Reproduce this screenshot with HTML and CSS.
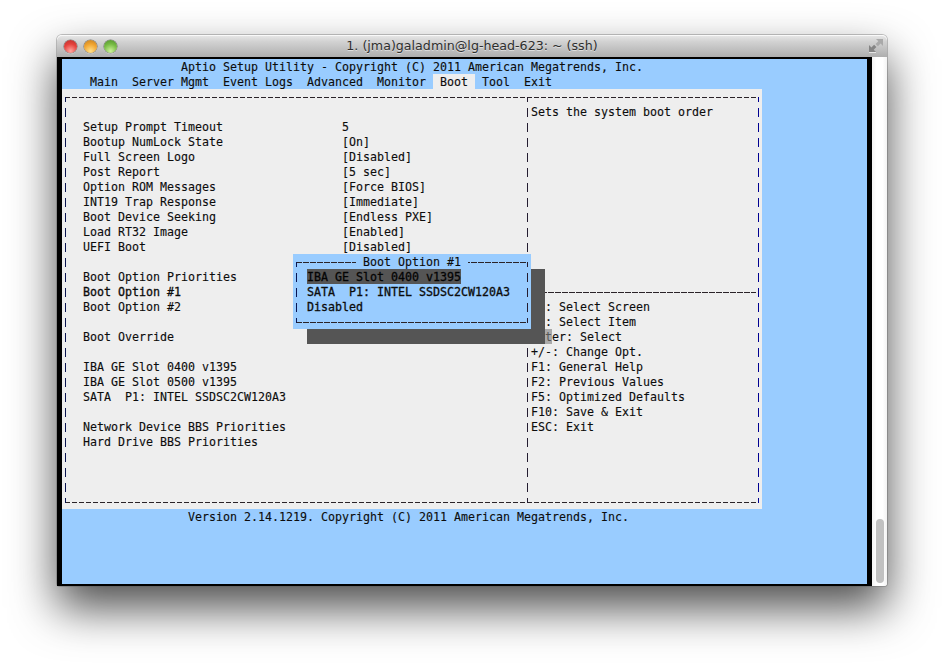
FILE: index.html
```html
<!DOCTYPE html>
<html lang="en">
<head>
<meta charset="utf-8">
<title>1. (jma)galadmin@lg-head-623: ~ (ssh)</title>
<link rel="stylesheet" href="styles.css">
</head>
<body>
<div class="window">
  <header class="titlebar">
    <div class="lights">
      <span class="light light-red"></span>
      <span class="light light-yellow"></span>
      <span class="light light-green"></span>
    </div>
    <div class="title">1. (jma)galadmin@lg-head-623: ~ (ssh)</div>
    <svg class="resize" width="16" height="16" viewBox="0 0 16 16">
      <path fill="#a9a9a9" d="M8 1h7v7l-2.4-2.4-2.7 2.7-2.3-2.3 2.7-2.7z"/>
      <path fill="#858585" d="M1 14V7l2.4 2.4 2.7-2.7 2.3 2.3-2.7 2.7L8 14z"/>
      <path fill="#e4e4e4" d="M1 14h7v1H1z"/>
    </svg>
  </header>
  <div class="body">
    <div class="terminal">
      <div class="screen">
        <div class="row head-title">Aptio Setup Utility - Copyright (C) 2011 American Megatrends, Inc.</div>
        <div class="row">    Main  Server Mgmt  Event Logs  Advanced  Monitor <span class="tab-active"> Boot </span> Tool  Exit</div>
        <div class="panel">
          <svg class="frame" width="700" height="420">
            <path class="h" d="M3 8.5H697M3 413.5H697"/>
            <path class="h solid" d="M465 203.5H694"/>
            <path class="v v-left" d="M3.5 8V414"/>
            <path class="v v-mid" d="M465.5 8V414"/>
            <path class="v v-right" d="M696.5 8V414"/>
          </svg>
          <div class="pane-left">
            <div class="setting"><span>Setup Prompt Timeout</span><span>5</span></div>
            <div class="setting"><span>Bootup NumLock State</span><span>[On]</span></div>
            <div class="setting"><span>Full Screen Logo</span><span>[Disabled]</span></div>
            <div class="setting"><span>Post Report</span><span>[5 sec]</span></div>
            <div class="setting"><span>Option ROM Messages</span><span>[Force BIOS]</span></div>
            <div class="setting"><span>INT19 Trap Response</span><span>[Immediate]</span></div>
            <div class="setting"><span>Boot Device Seeking</span><span>[Endless PXE]</span></div>
            <div class="setting"><span>Load RT32 Image</span><span>[Enabled]</span></div>
            <div class="setting"><span>UEFI Boot</span><span>[Disabled]</span></div>
            <div class="row gap">Boot Option Priorities</div>
            <div class="row strong">Boot Option #1</div>
            <div class="row">Boot Option #2</div>
            <div class="row gap">Boot Override</div>
            <div class="row gap">IBA GE Slot 0400 v1395</div>
            <div class="row">IBA GE Slot 0500 v1395</div>
            <div class="row">SATA  P1: INTEL SSDSC2CW120A3</div>
            <div class="row gap">Network Device BBS Priorities</div>
            <div class="row">Hard Drive BBS Priorities</div>
          </div>
          <div class="pane-right">
            <div class="row">Sets the system boot order</div>
            <div class="help">
              <div class="row">→←: Select Screen</div>
              <div class="row">↑↓: Select Item</div>
              <div class="row">En<span class="dim">t</span>er: Select</div>
              <div class="row">+/-: Change Opt.</div>
              <div class="row">F1: General Help</div>
              <div class="row">F2: Previous Values</div>
              <div class="row">F5: Optimized Defaults</div>
              <div class="row">F10: Save &amp; Exit</div>
              <div class="row">ESC: Exit</div>
            </div>
          </div>
        </div>
        <div class="row foot">Version 2.14.1219. Copyright (C) 2011 American Megatrends, Inc.</div>
        <div class="popup">
          <svg class="popup-frame" width="238" height="75">
            <path class="h solid" d="M3 8.5H235M3 68.5H235"/>
            <path class="v v-left" d="M3.5 8V69"/>
            <path class="v v-mid" d="M234.5 8V69"/>
          </svg>
          <div class="popup-title"><span>Boot Option #1</span></div>
          <div class="row popup-item strong"><span class="selected">IBA GE Slot 0400 v1395</span></div>
          <div class="row popup-item strong">SATA  P1: INTEL SSDSC2CW120A3</div>
          <div class="row popup-item strong">Disabled</div>
        </div>
      </div>
    </div>
    <div class="scrollbar"><div class="thumb"></div></div>
  </div>
</div>
</body>
</html>
```
FILE: styles.css
```css
* { box-sizing: border-box; }
html, body { margin: 0; height: 100%; }
body {
  background: #fff;
  padding: 35px 0 0 57px;
  overflow: hidden;
}
.window {
  width: 830px;
  height: 551px;
  border-radius: 5px 5px 3px 3px;
  box-shadow: 0 0 0 1px rgba(90, 90, 90, .35), 0 22px 46px rgba(0, 0, 0, .7);
  display: flex;
  flex-direction: column;
  background: #fff;
}
.titlebar {
  height: 22px;
  flex: none;
  display: grid;
  grid-template-columns: 1fr auto 1fr;
  align-items: center;
  border-radius: 5px 5px 0 0;
  background: linear-gradient(#e9e9e9, #d2d2d2 30%, #aeaeae);
  box-shadow: inset 0 1px 0 rgba(255, 255, 255, .75);
}
.lights {
  display: flex;
  gap: 7px;
  padding-left: 7px;
}
.light {
  width: 13px;
  height: 13px;
  border-radius: 50%;
  box-shadow: 0 0 0 .5px rgba(0, 0, 0, .45), 0 1px 1px rgba(255, 255, 255, .6);
}
.light-red { background: radial-gradient(circle at 50% 85%, #ffa6a0, #e5413c 55%, #b5302c); }
.light-yellow { background: radial-gradient(circle at 50% 85%, #ffe08a, #f1a42f 55%, #bd7d24); }
.light-green { background: radial-gradient(circle at 50% 85%, #cdf29b, #77bb44 55%, #4f8e2d); }
.title {
  font: 12.65px/16px "DejaVu Sans", sans-serif;
  color: #2e2e2e;
  text-shadow: 0 1px 0 rgba(255, 255, 255, .5);
  white-space: nowrap;
}
.resize { justify-self: end; margin-right: 3px; }
.body {
  flex: 1;
  display: flex;
  min-height: 0;
}
.terminal {
  width: 815px;
  background: #000;
  padding: 2px 5px;
}
.screen {
  position: relative;
  height: 525px;
  background: #9cf;
  font: 11.63px/17px "DejaVu Sans Mono", monospace;
  color: #0c0c0c;
  -webkit-text-stroke: .12px #0c0c0c;
}
.row { white-space: pre; height: 15px; }
.head-title { padding-left: 119px; }
.tab-active { background: #eee; display: inline-block; height: 15px; }
.foot { padding-left: 126px; }
.panel {
  position: relative;
  width: 700px;
  height: 420px;
  background: #eee;
  padding-top: 15px;
  display: grid;
  grid-template-columns: 469px 231px;
}
.frame, .popup-frame {
  position: absolute;
  left: 0;
  top: 0;
  fill: none;
}
.h { stroke: #2a2328; stroke-dasharray: 5 2; }
.h.solid { stroke-dasharray: 6 1; }
.v { stroke-dasharray: 9 6; stroke-dashoffset: 4; }
.v-left { stroke: #0a1450; }
.v-mid { stroke: #241c30; }
.v-right { stroke: #000090; }
.pane-left { padding: 15px 0 0 21px; }
.setting {
  display: grid;
  grid-template-columns: 259px auto;
  white-space: pre;
  height: 15px;
}
.gap { margin-top: 15px; }
.strong { -webkit-text-stroke: .3px #0c0c0c; }
.help { margin-top: 180px; }
.dim { background: #aaa; color: #555; -webkit-text-stroke: 0; display: inline-block; height: 15px; }
.popup {
  position: absolute;
  left: 231px;
  top: 195px;
  width: 238px;
  height: 75px;
  background: #9cf;
  box-shadow: 14px 15px 0 #555;
}
.popup-title {
  position: relative;
  height: 15px;
  text-align: center;
  white-space: pre;
}
.popup-title span { background: #9cf; padding: 0 7px; display: inline-block; height: 15px; }
.popup-item { position: relative; padding-left: 14px; }
.selected { background: #555; color: #000; display: inline-block; height: 15px; }
.scrollbar {
  width: 15px;
  background: linear-gradient(90deg, #f3f3f3, #fff 30%, #fff 70%, #f3f3f3);
  display: flex;
  justify-content: center;
  align-items: flex-end;
  padding-bottom: 3px;
  border-radius: 0 0 3px 0;
}
.thumb {
  width: 8px;
  height: 64px;
  border-radius: 4px;
  background: #c1c1c1;
}
```
